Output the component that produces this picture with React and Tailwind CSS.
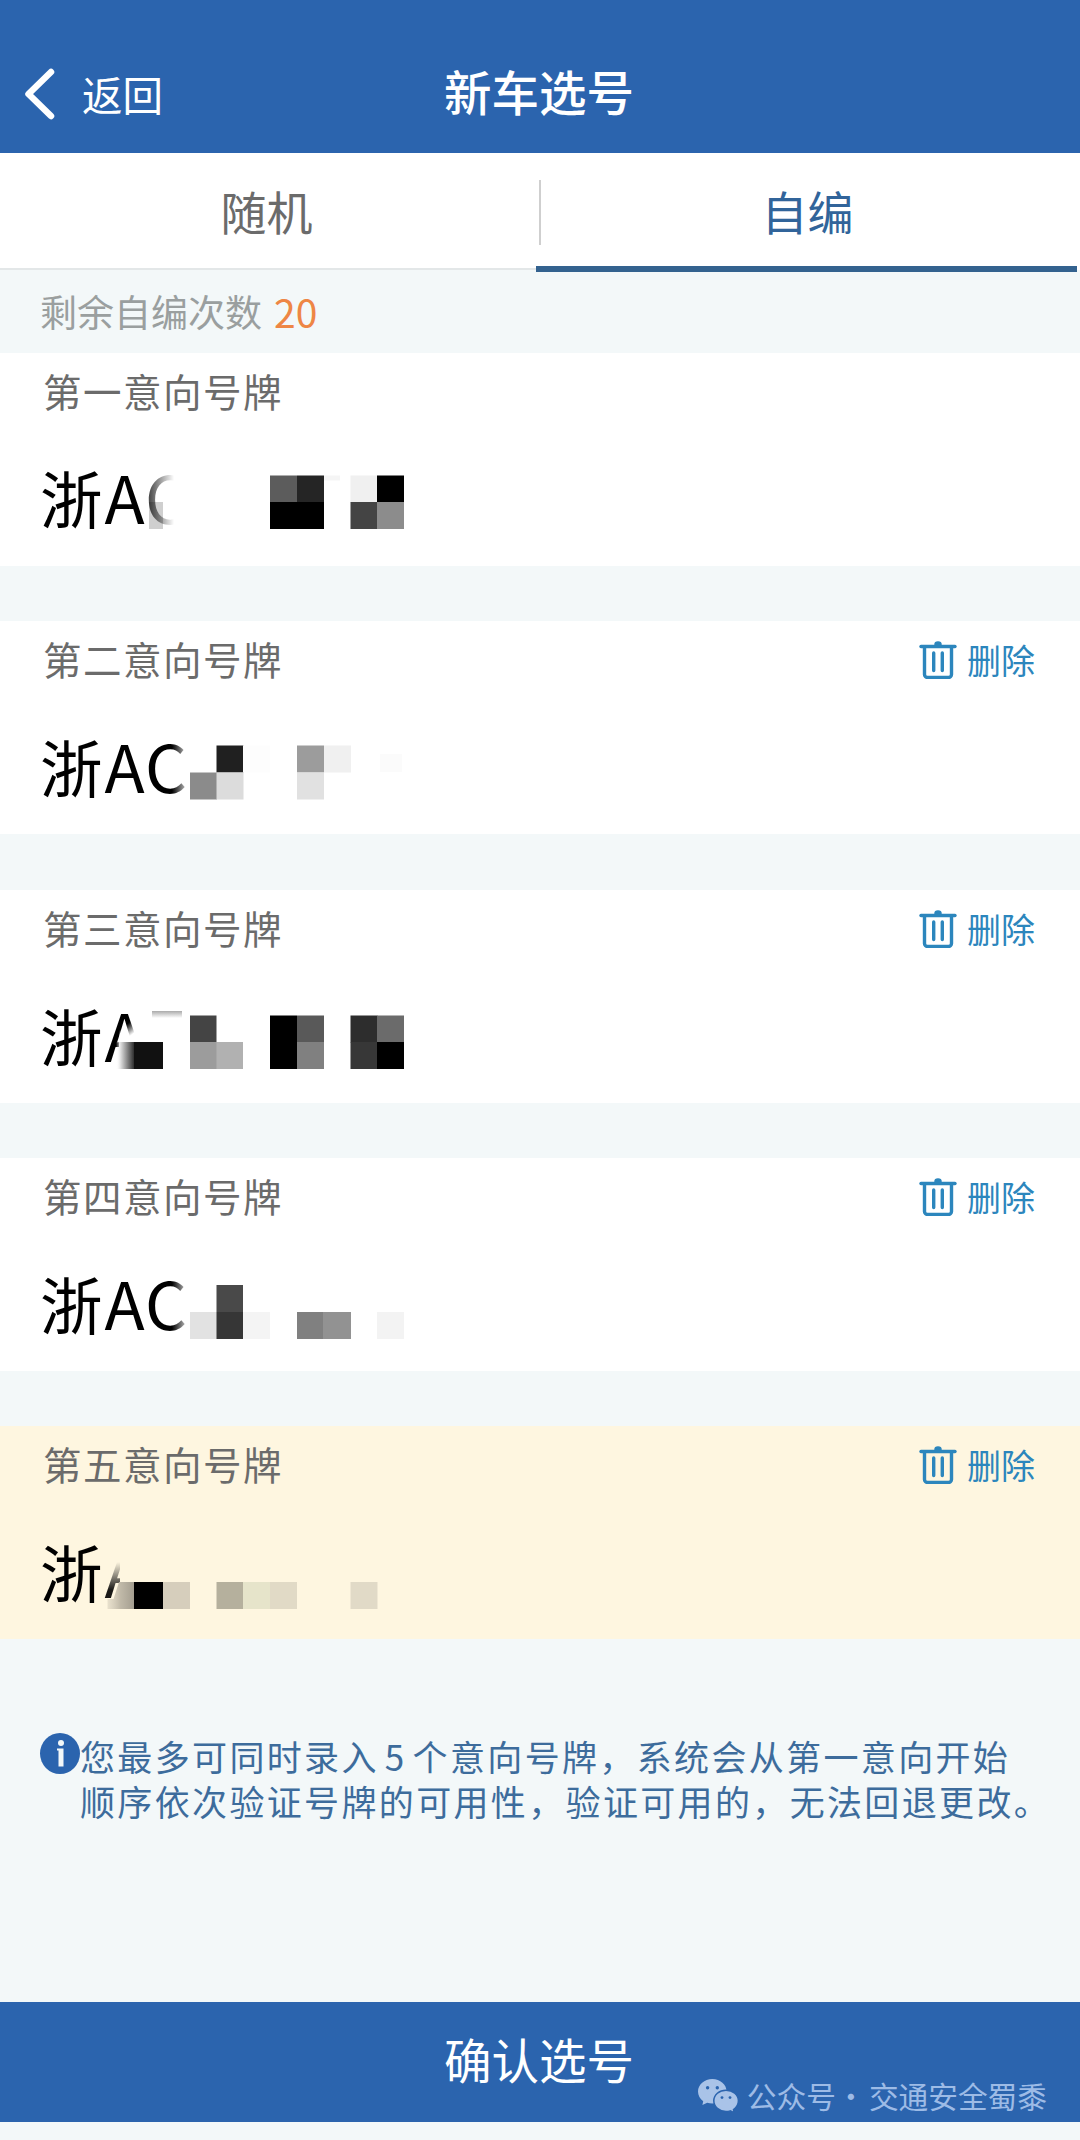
// mosaic blocks: [x, y, width, height, color], relative to the card
const cards = [
  {
    id: 1,
    title: '第一意向号牌',
    letters: 'AC',
    blocks: [
      [149, 149, 14, 27, '#00000030'],
      [270, 122.5, 27, 27, '#5c5c5c'],
      [297, 122.5, 27, 27, '#252525'],
      [270, 149, 54, 27, '#000000'],
      [324, 122.5, 16, 5, '#f5f5f5'],
      [350.5, 122.5, 27, 27, '#f0f0f0'],
      [377, 122.5, 27, 27, '#000000'],
      [350.5, 149, 27, 27, '#444444'],
      [377, 149, 27, 27, '#8c8c8c'],
    ],
  },
  {
    id: 2,
    title: '第二意向号牌',
    letters: 'AC',
    canDelete: true,
    blocks: [
      [216.5, 124.5, 27, 27, '#202020'],
      [190, 151.5, 27, 27, '#8b8b8b'],
      [216.5, 151.5, 27, 27, '#dcdcdc'],
      [243, 124.5, 27, 27, '#fdfdfd'],
      [297, 124.5, 27, 27, '#9c9c9c'],
      [324, 124.5, 27, 27, '#f0f0f0'],
      [297, 151.5, 27, 27, '#e1e1e1'],
      [380, 133, 22, 18, '#fbfbfb'],
    ],
  },
  {
    id: 3,
    title: '第三意向号牌',
    letters: 'A',
    canDelete: true,
    blocks: [
      [134, 152, 29, 27, '#111111'],
      [190, 125.5, 26.5, 27, '#444444'],
      [190, 152, 27, 27, '#9c9c9c'],
      [216.5, 152, 26.5, 27, '#b1b1b1'],
      [270, 125.5, 27, 53.5, '#000000'],
      [297, 125.5, 27, 27, '#595959'],
      [297, 152, 27, 27, '#808080'],
      [350.5, 125.5, 27, 27, '#2d2d2d'],
      [377, 125.5, 27, 27, '#6b6b6b'],
      [350.5, 152, 27, 27, '#373737'],
      [377, 152, 27, 27, '#000000'],
    ],
  },
  {
    id: 4,
    title: '第四意向号牌',
    letters: 'AC',
    canDelete: true,
    blocks: [
      [190, 154, 27, 27, '#e2e2e2'],
      [216.5, 127, 26.5, 27, '#494949'],
      [216.5, 154, 26.5, 27, '#363636'],
      [243, 154, 27, 27, '#f4f4f4'],
      [297, 154, 26, 27, '#808080'],
      [323, 154, 28, 27, '#929292'],
      [377, 154, 27, 27, '#f3f3f3'],
    ],
  },
  {
    id: 5,
    title: '第五意向号牌',
    letters: 'A',
    canDelete: true,
    active: true,
    blocks: [
      [134, 156, 29, 27, '#000000'],
      [163, 156, 27, 27, '#d6cebc'],
      [216.5, 156, 27, 27, '#b5b09d'],
      [243, 156, 27, 27, '#e6e4ca'],
      [270, 156, 27, 27, '#e1dac6'],
      [350.5, 156, 27, 27, '#e1dac7'],
    ],
  },
];

function BackIcon() {
  return (
    <svg className="h-[52px] w-[30px]" viewBox="0 0 30 52" fill="none" stroke="currentColor" strokeWidth="6.5" strokeLinecap="round" strokeLinejoin="round">
      <path d="M26 4 3.500 26 26 48" />
    </svg>
  );
}

function TrashIcon() {
  return (
    <svg className="h-[38px] w-[38px]" viewBox="0 0 38 38" fill="none" stroke="currentColor" strokeWidth="3.4" strokeLinecap="round" strokeLinejoin="round">
      <path d="M2 5.500h34" />
      <path d="M16 3.400a3 2.400 0 0 1 6 0z" fill="currentColor" strokeWidth="1.500" />
      <path d="M5.500 6v27.500a3 3 0 0 0 3 3h21a3 3 0 0 0 3-3V6" />
      <path d="M14.700 12v17.500M23.300 12v17.500" />
    </svg>
  );
}

function InfoIcon() {
  return (
    <svg className="h-[41px] w-10 shrink-0" viewBox="0 0 40 41">
      <ellipse cx="20" cy="20.5" rx="20" ry="20.5" fill="#2b64ae" />
      <circle cx="21" cy="10" r="3" fill="#f3f8f9" />
      <path d="M17 15.500h6.500V33.500h-5V17.500H17z" fill="#f3f8f9" />
    </svg>
  );
}

function WechatIcon() {
  return (
    <svg className="h-[34px] w-[41px]" viewBox="0 0 41 34">
      <path fill="#a9c3e8" d="M14.300 0C6.400 0 0 5.600 0 12.600c0 3.900 2 7.300 5.200 9.700L4.400 26l4.800-2.300c1.600.5 3.300.8 5.100.8C22.200 24.500 28.600 19.500 28.600 12.400 28.600 5.600 22.200 0 14.300 0z" />
      <path fill="#a9c3e8" stroke="#2b64ae" strokeWidth="1.500" d="M28 11.200c-6.800 0-12.200 4.700-12.200 10.600S21.200 32.500 28 32.500c1.500 0 2.900-.2 4.200-.6l4 1.900-.7-3.200c2.900-2 4.900-5.200 4.900-8.800 0-5.900-5.600-10.600-12.400-10.600z" />
      <g fill="#2b64ae">
        <circle cx="9.600" cy="8.800" r="1.700" />
        <circle cx="19.300" cy="8.800" r="1.700" />
        <circle cx="24" cy="18.600" r="1.400" />
        <circle cx="32" cy="18.600" r="1.400" />
      </g>
    </svg>
  );
}

// fades the last readable letter into the mosaic
function Fade({ id }) {
  if (id === 1) {
    return (
      <>
        <defs>
          <linearGradient id="fade1" x1="146" x2="174" y1="0" y2="0" gradientUnits="userSpaceOnUse">
            <stop offset="0" stopColor="#fff" stopOpacity="0.2" />
            <stop offset="1" stopColor="#fff" />
          </linearGradient>
        </defs>
        <rect x="147" y="115" width="50" height="65" fill="url(#fade1)" />
      </>
    );
  }
  if (id === 3) {
    return (
      <>
        <defs>
          <linearGradient id="fade3" x1="127" x2="134" y1="134" y2="143" gradientUnits="userSpaceOnUse">
            <stop offset="0" stopColor="#fff" stopOpacity="0" />
            <stop offset="1" stopColor="#fff" />
          </linearGradient>
          <linearGradient id="smear3" x1="116" x2="135" y1="0" y2="0" gradientUnits="userSpaceOnUse">
            <stop offset="0" stopColor="#fff" stopOpacity="0" />
            <stop offset="0.25" stopColor="#ddd" />
            <stop offset="1" stopColor="#222" />
          </linearGradient>
          <linearGradient id="dash3" x1="0" x2="0" y1="121" y2="128" gradientUnits="userSpaceOnUse">
            <stop offset="0" stopColor="#aaa" />
            <stop offset="1" stopColor="#fff" />
          </linearGradient>
        </defs>
        <rect x="119" y="115" width="33" height="66" fill="url(#fade3)" />
        <rect x="116" y="152" width="19" height="27" fill="url(#smear3)" />
        <rect x="152" y="121" width="30" height="7" fill="url(#dash3)" />
      </>
    );
  }
  if (id === 5) {
    return (
      <>
        <defs>
          <linearGradient id="fade5" x1="0" x2="0" y1="164" y2="136" gradientUnits="userSpaceOnUse">
            <stop offset="0" stopColor="#fef6e0" stopOpacity="0.1" />
            <stop offset="1" stopColor="#fef6e0" />
          </linearGradient>
          <linearGradient id="smear5" x1="107" x2="134" y1="0" y2="0" gradientUnits="userSpaceOnUse">
            <stop offset="0" stopColor="#d6cebc" stopOpacity="0.5" />
            <stop offset="0.5" stopColor="#c0b9a8" />
            <stop offset="1" stopColor="#a49e90" />
          </linearGradient>
        </defs>
        <rect x="104" y="112" width="46" height="72" fill="url(#fade5)" />
        <path d="M120 115h30v68h-30z" fill="#fef6e0" />
        <path d="M119 156h15.500v27h-27V173h6z" fill="url(#smear5)" />
      </>
    );
  }
  return (
    <>
      <defs>
        <linearGradient id={`fade${id}`} x1="172" x2="191" y1="0" y2="0" gradientUnits="userSpaceOnUse">
          <stop offset="0" stopColor="#fff" stopOpacity="0" />
          <stop offset="1" stopColor="#fff" />
        </linearGradient>
      </defs>
      <rect x="172" y="115" width="28" height="65" fill={`url(#fade${id})`} />
    </>
  );
}

function PlateCard({ card }) {
  return (
    <section className={`relative h-[213px] pl-[43px] pr-[45px] ${card.active ? 'bg-[#fef6e0]' : 'bg-white'}`}>
      <div className="flex items-start justify-between pt-[18px]">
        <h2 className="text-[38.5px] leading-none tracking-[1.5px] text-[#6b6b6b]">{card.title}</h2>
        {card.canDelete && (
          <button className="mt-0.5 flex items-center gap-2.5 text-[34px] leading-none text-[#2c86bd]">
            <TrashIcon />
            <span>删除</span>
          </button>
        )}
      </div>
      <p className="-ml-[3px] mt-[52px] flex items-baseline gap-[2px] text-[62.5px] leading-none text-black">
        <span>浙</span>
        <span className="text-[66px] tracking-[1px]">{card.letters}</span>
      </p>
      <svg className="absolute inset-0 h-[213px] w-full" viewBox="0 0 1080 213">
        <Fade id={card.id} />
        {card.blocks.map(([x, y, w, h, color], i) => (
          <rect key={i} x={x} y={y} width={w} height={h} fill={color} />
        ))}
      </svg>
    </section>
  );
}

export default function App() {
  return (
    <div lang="zh-CN" className="flex h-[2140px] w-[1080px] flex-col overflow-hidden bg-[#f3f8f9] font-['Noto_Sans_CJK_SC',sans-serif]">
      <header className="grid h-[153px] grid-cols-3 bg-[#2b64ae] pt-[68px] text-white">
        <button className="flex h-[52px] items-center gap-[27px] pl-[25px] text-[40.5px] leading-none">
          <BackIcon />
          <span>返回</span>
        </button>
        <h1 className="-mt-0.5 pr-0.5 text-center text-[47.5px] font-medium leading-[50px]">新车选号</h1>
      </header>

      <nav className="flex h-[117px] bg-white text-[46px] leading-none">
        <button className="flex flex-1 items-start justify-center border-b-2 border-[#e3e7e8] pr-1 pt-[34px] text-[#6b6b6b]">随机</button>
        <div className="ml-0.5 mt-[27px] h-[65px] w-0.5 bg-[#cfcfcf]" />
        <button className="relative flex flex-1 items-start justify-center pr-1.5 pt-[34px] text-[#31649a]">
          自编
          <span className="absolute -bottom-[2px] -left-[5px] right-[3px] h-[6px] bg-[#33628f]" />
        </button>
      </nav>

      <div className="flex h-[83px] items-start gap-3 pl-10 pt-[23px] text-[37px] leading-none text-[#9a9f9f]">
        <span>剩余自编次数</span>
        <span className="-mt-px text-[39px] text-[#ee8645]">20</span>
      </div>

      <main className="flex flex-col gap-[55.25px]">
        {cards.map(card => (
          <PlateCard key={card.id} card={card} />
        ))}
      </main>

      <div className="flex items-start pl-10 pt-[94px]">
        <InfoIcon />
        <div className="whitespace-nowrap text-[35px] leading-[45px] tracking-[2.35px] text-[#3d6c9c]">
          <p>您最多可同时录入<span className="mx-1.5">5</span>个意向号牌，系统会从第一意向开始</p>
          <p>顺序依次验证号牌的可用性，验证可用的，无法回退更改。</p>
        </div>
      </div>

      <footer className="relative mb-[18px] mt-auto flex h-[120px] justify-center bg-[#2b64ae] pr-0.5 pt-[33px] text-white">
        <button className="h-12 text-[47.5px] leading-none">确认选号</button>
        <div className="absolute right-[33px] top-[77px] flex items-center gap-2 text-[29.7px] leading-none text-[#9dbbe6]">
          <WechatIcon />
          <span className="flex">
            公众号<span className="w-[30px] text-center">·</span>
            <span className="ml-[3px]">交通安全蜀黍</span>
          </span>
        </div>
      </footer>
    </div>
  );
}
